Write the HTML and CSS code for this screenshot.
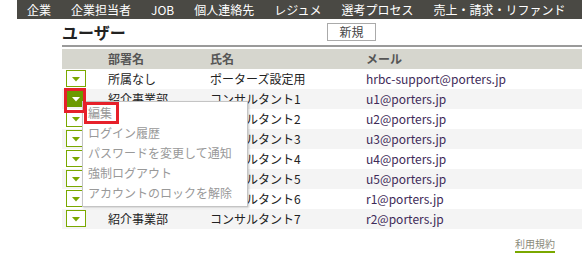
FILE: index.html
```html
<!DOCTYPE html>
<html lang="ja">
<head>
<meta charset="utf-8">
<title>ユーザー</title>
<link rel="stylesheet" href="styles.css">
</head>
<body>
<nav class="nav">
  <span class="nav-item">企業</span>
  <span class="nav-item">企業担当者</span>
  <span class="nav-item">JOB</span>
  <span class="nav-item">個人連絡先</span>
  <span class="nav-item">レジュメ</span>
  <span class="nav-item">選考プロセス</span>
  <span class="nav-item">売上・請求・リファンド</span>
</nav>
<main class="main">
  <div class="titlebar">
    <h1 class="title">ユーザー</h1>
    <button class="new-btn">新規</button>
  </div>
  <table class="users">
    <colgroup>
      <col class="c-act"><col class="c-dept"><col class="c-name"><col>
    </colgroup>
    <thead>
      <tr><th></th><th>部署名</th><th>氏名</th><th>メール</th></tr>
    </thead>
    <tbody>
      <tr><td><span class="dd"><span class="dd-btn"><svg width="8" height="5" viewBox="0 0 8 5"><polygon points="0,0 8,0 4,4.5"/></svg></span></span></td><td>所属なし</td><td>ポーターズ設定用</td><td class="mail">hrbc-support@porters.jp</td></tr>
      <tr class="alt"><td><span class="dd">
        <span class="dd-btn active"><svg width="8" height="5" viewBox="0 0 8 5"><polygon points="0,0 8,0 4,4.5"/></svg></span>
        <span class="hl hl-btn"></span>
        <ul class="menu">
          <li>編集</li>
          <li>ログイン履歴</li>
          <li>パスワードを変更して通知</li>
          <li>強制ログアウト</li>
          <li>アカウントのロックを解除</li>
          <span class="hl hl-item"></span>
        </ul>
      </span></td><td>紹介事業部</td><td>コンサルタント1</td><td class="mail">u1@porters.jp</td></tr>
      <tr><td><span class="dd"><span class="dd-btn"><svg width="8" height="5" viewBox="0 0 8 5"><polygon points="0,0 8,0 4,4.5"/></svg></span></span></td><td>紹介事業部</td><td>コンサルタント2</td><td class="mail">u2@porters.jp</td></tr>
      <tr class="alt"><td><span class="dd"><span class="dd-btn"><svg width="8" height="5" viewBox="0 0 8 5"><polygon points="0,0 8,0 4,4.5"/></svg></span></span></td><td>紹介事業部</td><td>コンサルタント3</td><td class="mail">u3@porters.jp</td></tr>
      <tr><td><span class="dd"><span class="dd-btn"><svg width="8" height="5" viewBox="0 0 8 5"><polygon points="0,0 8,0 4,4.5"/></svg></span></span></td><td>紹介事業部</td><td>コンサルタント4</td><td class="mail">u4@porters.jp</td></tr>
      <tr class="alt"><td><span class="dd"><span class="dd-btn"><svg width="8" height="5" viewBox="0 0 8 5"><polygon points="0,0 8,0 4,4.5"/></svg></span></span></td><td>紹介事業部</td><td>コンサルタント5</td><td class="mail">u5@porters.jp</td></tr>
      <tr><td><span class="dd"><span class="dd-btn"><svg width="8" height="5" viewBox="0 0 8 5"><polygon points="0,0 8,0 4,4.5"/></svg></span></span></td><td>紹介事業部</td><td>コンサルタント6</td><td class="mail">r1@porters.jp</td></tr>
      <tr class="alt"><td><span class="dd"><span class="dd-btn"><svg width="8" height="5" viewBox="0 0 8 5"><polygon points="0,0 8,0 4,4.5"/></svg></span></span></td><td>紹介事業部</td><td>コンサルタント7</td><td class="mail">r2@porters.jp</td></tr>
    </tbody>
  </table>
  <footer class="footer"><a class="terms">利用規約</a></footer>
</main>
</body>
</html>
```

FILE: styles.css
```css
* { box-sizing: border-box; }
html, body { margin: 0; padding: 0; background: #fff; }
body {
  font-family: "Noto Sans CJK JP", "Noto Sans", sans-serif;
  font-size: 12px;
  color: #222;
  width: 582px;
  height: 260px;
  overflow: hidden;
}
.nav {
  margin-left: 17px;
  height: 19px;
  background: #4a4944;
  display: flex;
  align-items: center;
  gap: 20px;
  padding-left: 10px;
  white-space: nowrap;
}
.nav-item {
  color: #fff;
  font-size: 12px;
  line-height: 19px;
}
.main { margin-left: 62px; }
.titlebar {
  height: 28px;
  display: flex;
  align-items: center;
  border-bottom: 2px solid #9a9a9a;
}
.title {
  margin: 0;
  font-size: 16px;
  font-weight: bold;
  line-height: 20px;
  color: #222;
  width: 64px;
}
.new-btn {
  margin-left: 201px;
  width: 49px;
  height: 18px;
  padding: 0;
  border: 1px solid #aaa;
  background: #fff;
  font-family: inherit;
  font-size: 12px;
  line-height: 16px;
  color: #444;
}
.users {
  margin-top: 2px;
  width: 520px;
  border-collapse: collapse;
  table-layout: fixed;
}
.c-act { width: 46px; }
.c-dept { width: 102px; }
.c-name { width: 156px; }
.users th, .users td {
  height: 20px;
  padding: 0;
  text-align: left;
  white-space: nowrap;
  line-height: 20px;
}
.users th {
  background: #d6d6ce;
  font-weight: bold;
  color: #555;
}
.users tr.alt td { background: #f4f4f4; }
.users td:first-child { padding-left: 4px; vertical-align: top; }
.mail { color: #3e2a58; }
.dd {
  position: relative;
  display: block;
  width: 20px;
  height: 17px;
  margin-top: 1px;
}
.dd-btn {
  display: flex;
  align-items: center;
  justify-content: center;
  width: 20px;
  height: 17px;
  border: 1px solid #7aa800;
  background: #fff;
}
.dd-btn svg { display: block; fill: #7aa800; margin-top: 1px; }
.dd-btn.active { background: #6b9a00; border-color: #6b9a00; }
.dd-btn.active svg { fill: #fff; }
.hl {
  position: absolute;
  border: 3px solid #e6202a;
  z-index: 3;
}
.hl-btn { left: -2px; top: -2px; width: 22px; height: 25px; }
.menu {
  position: absolute;
  left: 16px;
  top: 11px;
  width: 166px;
  margin: 0;
  padding: 1px 0 3px 5px;
  list-style: none;
  background: #fff;
  border: 1px solid #c4c4c4;
  box-shadow: 1px 1px 2px rgba(0,0,0,0.2);
  z-index: 2;
}
.menu li {
  line-height: 20px;
  height: 20px;
  color: #999;
  white-space: nowrap;
}
.hl-item { left: 1px; top: 0; width: 35px; height: 22px; }
.footer {
  text-align: right;
  padding-right: 27px;
  padding-top: 5px;
}
.terms {
  font-size: 10px;
  line-height: 13px;
  color: #8a8a7a;
  text-decoration: none;
  border-bottom: 2px solid #7aa800;
}
```
